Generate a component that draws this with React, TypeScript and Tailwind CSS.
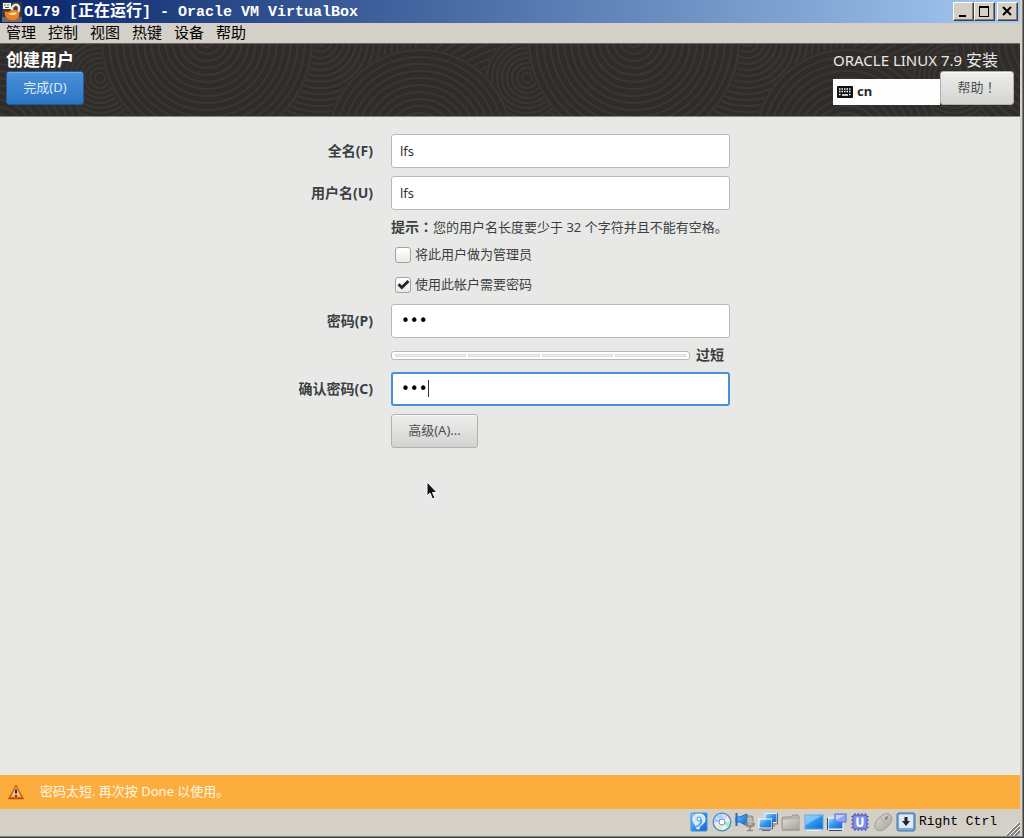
import type { ReactNode } from "react";

const menus = ["管理", "控制", "视图", "热键", "设备", "帮助"];

const rings = (step: number, count: number) =>
  Array.from({ length: count }, (_, index) => step * (index + 1));

function Rings({ cx, cy, count, step = 7 }: { cx: number; cy: number; count: number; step?: number }) {
  return (
    <g>
      <circle cx={cx} cy={cy} r={step * count + 2} fill="#302c29" stroke="none" />
      {rings(step, count).map((r) => (
        <circle key={r} cx={cx} cy={cy} r={r} />
      ))}
    </g>
  );
}

function HeaderPattern() {
  return (
    <svg className="absolute inset-0 h-full w-full" aria-hidden="true">
      <defs>
        <pattern id="rings" width="427" height="73" patternUnits="userSpaceOnUse">
          <g fill="none" stroke="#3a3633" strokeWidth="2">
            <Rings cx={100} cy={120} count={22} />
            <Rings cx={320} cy={-4} count={16} step={6} />
            <Rings cx={100} cy={34} count={8} step={5} />
            <Rings cx={420} cy={97} count={13} />
            <Rings cx={-7} cy={97} count={13} />
            <Rings cx={207} cy={-4} count={15} />
          </g>
        </pattern>
      </defs>
      <rect width="100%" height="100%" fill="url(#rings)" />
    </svg>
  );
}

function AppIcon() {
  return (
    <svg className="h-5 w-5" viewBox="0 0 20 20" aria-hidden="true">
      <rect width="20" height="20" fill="#3b3836" />
      <path d="M0 15h20v5H0z" fill="#6e6a66" />
      <path d="M1 1h8v6H1z" fill="#f4f4f4" />
      <path d="M2 3h2M5 3h2M3 5.500h4" stroke="#555" />
      <path d="M10 9c-1-8 8-8 7-2 0 3-1 3-2 4" fill="none" stroke="#e8e4de" strokeWidth="2.500" />
      <path d="M3 9c3 2 4 0 7-1 5-1 8 2 7 6-1 5-10 6-13 1C3 13 2 11 3 9z" fill="#ee7d1d" />
      <path d="M6 11c3 1 6-2 9 0-2 3-7 3-9 0z" fill="#ffe0a8" />
    </svg>
  );
}

function WindowButton({ label, children }: { label: string; children: ReactNode }) {
  return (
    <button
      type="button"
      aria-label={label}
      className="flex h-[19px] w-[21px] items-center justify-center border border-t-white border-r-[#404040] border-b-[#404040] border-l-white bg-[#d4d0c8] shadow-[inset_-1px_-1px_0_#808080]"
    >
      <svg className="h-[13px] w-[13px]" viewBox="0 0 13 13" fill="none" stroke="#000" shapeRendering="crispEdges">
        {children}
      </svg>
    </button>
  );
}

function Keyboard() {
  return (
    <svg className="h-3 w-4" viewBox="0 0 16 12" aria-hidden="true">
      <rect width="16" height="12" rx="1" fill="#111" />
      <path
        d="M2 3h12M2 5.500h12M2 8.500h2M12 8.500h2"
        stroke="#fff"
        strokeWidth="1.500"
        strokeDasharray="1.500 1"
      />
      <path d="M5 9h6" stroke="#fff" strokeWidth="1.500" />
    </svg>
  );
}

function Warning() {
  return (
    <svg className="h-4 w-4" viewBox="0 0 16 16" aria-hidden="true">
      <path d="M8 1.500 15 14.300H1z" fill="#f08a3c" stroke="#d9651a" strokeWidth="1.500" strokeLinejoin="round" />
      <path d="M1 14.500h14" stroke="#b84606" strokeWidth="1.500" strokeLinecap="round" />
      <path d="M8 3.500 12.500 12.500h-9z" fill="#f6d3ab" opacity=".8" />
      <path d="M8 5.500v4M8 11v1.700" stroke="#222" strokeWidth="1.800" />
    </svg>
  );
}

const statusIcons: { name: string; drawing: ReactNode }[] = [
  {
    name: "硬盘",
    drawing: (
      <>
        <rect x="2" y="1" width="16" height="18" rx="1" fill="url(#blue)" stroke="#3d8ed6" />
        <path d="M4 7c0-6 12-7 12 0 0 6-6 5-6 10-4 0-3-3-4-5-1-1-2-3-2-5z" fill="#cfe9fb" stroke="#fff" />
        <path d="M6 15c5-1 8-5 5-9" fill="none" stroke="#3a8fd8" strokeWidth="1.500" />
        <circle cx="10" cy="7" r="2" fill="#fff" stroke="#4a9ade" />
      </>
    ),
  },
  {
    name: "光驱",
    drawing: (
      <>
        <circle cx="10" cy="10" r="8.800" fill="#e4f0fb" stroke="#3f8bd0" strokeWidth="1.300" />
        <path d="M10 10 4 4.500a8 8 0 0 1 6-2.500z" fill="#9fd9fa" />
        <path d="M10 10V2a8 8 0 0 1 5.500 2.200z" fill="#f5c5ec" />
        <path d="M10 10h8a8 8 0 0 1-2 5.300z" fill="#a6ecab" />
        <path d="M10 10v8a8 8 0 0 1-5.600-2.300z" fill="#f2e6a8" />
        <path d="M10 10H2a8 8 0 0 1 1-4z" fill="#cdb4f2" />
        <circle cx="10" cy="10" r="3" fill="#fff" stroke="#5a9bd6" />
      </>
    ),
  },
  {
    name: "音频",
    drawing: (
      <>
        <path d="M1 5h4l7-3v12L5 10H1z" fill="url(#blue)" stroke="#1f66b5" />
        <path d="M1.500 1v13" stroke="#2370bf" strokeWidth="2" />
        <rect x="12" y="4" width="6" height="10" rx="2" fill="#aaa69f" stroke="#88857f" />
        <path d="M12 7h6M12 9.500h6M15 4v9" stroke="#d8d5cf" strokeWidth=".7" />
        <path d="M10.500 11c0 5 9 5 9 0M15 15v3M12 18.500h6" fill="none" stroke="#8e8b85" strokeWidth="1.400" />
      </>
    ),
  },
  {
    name: "网络",
    drawing: (
      <>
        <rect x="7" y="1.500" width="12" height="9" fill="url(#blue)" stroke="#eef5fb" />
        <path d="M7 12h12.500V1M12 14h5" fill="none" stroke="#55687b" />
        <rect x="1" y="7" width="13" height="9" fill="url(#blue)" stroke="#fff" />
        <path d="M1 17h13.500V7M4 18.500h8" fill="none" stroke="#55687b" />
      </>
    ),
  },
  {
    name: "共享文件夹",
    drawing: (
      <>
        <path d="M1 17V6l1-1h8l2-2h5l1 2v12z" fill="#b9b6b0" stroke="#99968f" />
        <path d="M2 17V8l16-1v10z" fill="url(#grey)" />
        <path d="M1 18h18" stroke="#8a8781" />
      </>
    ),
  },
  {
    name: "显示",
    drawing: (
      <>
        <rect x="1" y="3" width="18" height="14" fill="url(#blue)" stroke="#5ba8e8" />
        <path d="M1.500 3.500h17L1.500 13z" fill="#8dd0fa" opacity=".65" />
        <path d="M2 18.500h15" stroke="#eef4fa" />
      </>
    ),
  },
  {
    name: "录像",
    drawing: (
      <>
        <rect x="1" y="6" width="15" height="11" fill="url(#blue)" stroke="#fff" />
        <path d="M2 18.500h13M.5 6v12" stroke="#334e74" />
        <rect x="8" y="2" width="11" height="8" fill="#8fa8f2" stroke="#5774d1" />
        <path d="M9 3h9l-9 5z" fill="#c8d4fc" />
      </>
    ),
  },
  {
    name: "虚拟化",
    drawing: (
      <>
        <path
          d="M5 1v18M8.500 1v18M12 1v18M15.500 1v18M1 4.500h18M1 8h18M1 12h18M1 15.500h18"
          stroke="#5a66c4"
          strokeWidth="1.200"
        />
        <rect x="3" y="3" width="14" height="14" rx="1" fill="#7d92ea" stroke="#4856b4" />
        <path d="M7.500 5.500v6q0 2.500 2.500 2.500t2.500-2.500v-6" fill="none" stroke="#fff" strokeWidth="2.200" />
      </>
    ),
  },
  {
    name: "鼠标",
    drawing: (
      <>
        <path d="M17 3c4 3 1 8-2 11-4 5-10 6-12 3-3-4 0-8 4-12 4-3 7-5 10-2z" fill="url(#grey)" stroke="#9c9992" />
        <path d="M8 5c1 4 4 7 8 7M11 9l4-5" fill="none" stroke="#b5b2aa" />
        <ellipse cx="13.500" cy="6" rx="1.300" ry="2" transform="rotate(40 13.500 6)" fill="#8d8a84" />
      </>
    ),
  },
  {
    name: "键盘捕获",
    drawing: (
      <>
        <rect x="1" y="1" width="18" height="18" rx="2" fill="#7ba8da" stroke="#40719f" />
        <rect x="3" y="2.500" width="14" height="13.500" rx="1" fill="#dceaf8" />
        <path d="M8.500 5h3v4H14l-4 5-4-5h2.500z" fill="#222" />
      </>
    ),
  },
];

function Check({ id, label, checked }: { id: string; label: string; checked?: boolean }) {
  return (
    <div className="col-start-2 ml-1 flex h-[22px] items-center gap-1">
      <span className="relative flex">
        <input
          id={id}
          type="checkbox"
          defaultChecked={checked}
          className="peer h-4 w-4 appearance-none rounded-[3px] border border-[#a1a19f] bg-linear-to-b from-white to-[#eaeae9]"
        />
        <svg className="pointer-events-none absolute inset-0 hidden h-4 w-4 peer-checked:block" viewBox="0 0 16 16">
          <path d="M3.500 7.200 6.800 10.500 13.500 4" fill="none" stroke="#232729" strokeWidth="3" />
        </svg>
      </span>
      <label htmlFor={id}>{label}</label>
    </div>
  );
}

const labelClass = "text-right text-sm leading-[34px] font-bold whitespace-nowrap";
const fieldClass =
  "h-[34px] w-full rounded-[3px] border border-[#b9b9b7] bg-white px-2 text-[13px] text-[#2e3436] outline-none";
const passwordClass =
  "h-[34px] w-full rounded-[3px] bg-white font-['DejaVu_Sans',sans-serif] text-[15px] text-black outline-none";
const buttonClass =
  "rounded-[3px] border border-[#b0b0ae] bg-linear-to-b from-[#eeeeed] to-[#d3d3d1] text-[13px] text-[#4b5052] shadow-[inset_0_1px_0_#f8f8f7]";

export default function App() {
  return (
    <div className="flex min-h-screen flex-col border-r border-b border-[#404040] bg-[#d4d0c8] font-['Noto_Sans','Noto_Sans_CJK_SC',sans-serif] text-[13px] text-[#3a4042]">
      <div className="flex flex-1 flex-col border-r border-b border-[#808080] pr-0.5">
        <div className="flex h-[23px] items-center bg-linear-to-r from-[#0a246a] to-[#a6caf0] px-0.5">
          <AppIcon />
          <h1 className="ml-0.5 flex-1 pt-0.5 font-['Liberation_Mono','Noto_Sans_CJK_SC',monospace] text-[15px] leading-5 font-bold whitespace-nowrap text-white">
            OL79 [<span className="text-base leading-5">正在运行</span>] - Oracle VM VirtualBox
          </h1>
          <WindowButton label="最小化">
            <path d="M2 10.500h7" strokeWidth="2" />
          </WindowButton>
          <WindowButton label="最大化">
            <path d="M1.500 2v9.500h9V2M1 2h10" />
            <path d="M1 2h10" strokeWidth="2" />
          </WindowButton>
          <div className="ml-0.5">
            <WindowButton label="关闭">
              <path d="m2 2 8 8M10 2l-8 8" strokeWidth="2" shapeRendering="auto" />
            </WindowButton>
          </div>
        </div>

        <nav className="flex h-5 items-center gap-3 px-1.5 font-['Liberation_Sans','Noto_Sans_CJK_SC',sans-serif] text-[15px] leading-5 text-black">
          {menus.map((menu) => (
            <button type="button" key={menu}>
              {menu}
            </button>
          ))}
        </nav>

        <header className="relative h-[74px] border-t border-b border-t-[#6b6864] border-b-[#8b8783] bg-[#302c29]">
          <HeaderPattern />
          <div className="relative flex justify-between px-1.5">
            <div>
              <h2 className="h-[27px] pt-1 text-[17px] leading-6 font-bold text-white">创建用户</h2>
              <button
                type="button"
                className="h-[34px] w-[78px] rounded-[3px] border border-[#1f5c9f] bg-linear-to-b from-[#4a90d9] to-[#2a76c6] text-[13px] text-[#dcebfa] shadow-[inset_0_1px_0_#6ba8e4]"
              >
                完成(D)
              </button>
            </div>
            <div>
              <p className="h-[27px] pt-1 text-[15px] leading-6 text-[#e8e8e7]">
                ORACLE LINUX 7.9 <span className="text-base leading-6">安装</span>
              </p>
              <div className="flex items-end">
                <button
                  type="button"
                  className="flex h-[26px] w-[107px] items-center gap-1 bg-[#fdfdfd] px-1 text-[13px] font-bold text-[#232729]"
                >
                  <Keyboard />
                  cn
                </button>
                <button
                  type="button"
                  className={`${buttonClass} h-[34px] w-[74px] font-['Noto_Sans','Noto_Sans_CJK_TC',sans-serif]`}
                >
                  帮助！
                </button>
              </div>
            </div>
          </div>
        </header>

        <main className="flex-1 bg-[#e8e8e7] pt-[17px]">
          <form className="grid grid-cols-[83px_339px] justify-center gap-x-[18px] gap-y-2">
            <label htmlFor="fullname" className={labelClass}>
              全名(F)
            </label>
            <input id="fullname" defaultValue="lfs" className={fieldClass} />

            <label htmlFor="username" className={labelClass}>
              用户名(U)
            </label>
            <input id="username" defaultValue="lfs" className={fieldClass} />

            <p className="col-start-2 h-[18px] leading-4 whitespace-nowrap">
              <b className="font-['Noto_Sans_CJK_TC',sans-serif] text-sm leading-4">提示：</b>
              您的用户名长度要少于 32 个字符并且不能有空格。
            </p>
            <Check id="admin" label="将此用户做为管理员" />
            <Check id="require" label="使用此帐户需要密码" checked />

            <label htmlFor="password" className={labelClass}>
              密码(P)
            </label>
            <input
              id="password"
              type="password"
              defaultValue="lfs"
              className={`${passwordClass} border border-[#b9b9b7] px-[9px]`}
            />

            <div className="col-start-2 flex h-[18px] items-center gap-1.5">
              <div
                role="meter"
                aria-label="密码强度"
                aria-valuemin={0}
                aria-valuemax={4}
                aria-valuenow={0}
                className="flex h-[9px] w-[299px] items-center gap-0.5 rounded-[3px] border border-[#b9b9b7] bg-white px-[3px]"
              >
                {[1, 2, 3, 4].map((level) => (
                  <span key={level} className="h-[3px] flex-1 border border-[#d9d9de] bg-[#f3f3f5]" />
                ))}
              </div>
              <b className="text-sm leading-[18px]">过短</b>
            </div>

            <label htmlFor="confirm" className={labelClass}>
              确认密码(C)
            </label>
            <div className="relative">
              <input
                id="confirm"
                type="password"
                defaultValue="lfs"
                className={`${passwordClass} border-2 border-[#4a90d9] px-2`}
              />
              <span className="absolute top-2 left-[37px] h-[17px] w-px bg-[#333]" />
            </div>

            <div className="relative col-start-2">
              <button type="button" className={`${buttonClass} h-[34px] w-[87px]`}>
                高级(A)...
              </button>
              <svg className="absolute top-[67px] left-[35px] h-5 w-3" viewBox="0 0 12 20" aria-hidden="true">
                <path
                  d="M1 1v14l3-3 2.500 6 2.500-1-2.500-5.500H11z"
                  fill="#111"
                  stroke="#fff"
                  strokeWidth="1"
                />
              </svg>
            </div>
          </form>
        </main>

        <div role="alert" className="flex h-[34px] items-center gap-4 bg-[#fbad3d] px-2 text-[#fff7e8]">
          <Warning />
          <span>密码太短. 再次按 Done 以使用。</span>
        </div>

        <footer className="flex h-[27px] items-start justify-end gap-[3px] pt-[3px]">
          <svg className="absolute h-0 w-0" aria-hidden="true">
            <defs>
              <linearGradient id="blue" x1="0" y1="0" x2="1" y2="1">
                <stop offset="0" stopColor="#9bdcff" />
                <stop offset=".5" stopColor="#2f93ee" />
                <stop offset="1" stopColor="#1465cf" />
              </linearGradient>
              <linearGradient id="grey" x1="0" y1="0" x2="1" y2="1">
                <stop offset="0" stopColor="#dedbd5" />
                <stop offset="1" stopColor="#a5a29b" />
              </linearGradient>
            </defs>
          </svg>
          {statusIcons.map((icon) => (
            <svg key={icon.name} className="h-5 w-5" viewBox="0 0 20 20" role="img" aria-label={icon.name}>
              {icon.drawing}
            </svg>
          ))}
          <span className="font-['Liberation_Mono',monospace] text-[13px] leading-5 text-black">Right Ctrl</span>
          <svg className="ml-1.5 h-[14px] w-[14px] self-end" viewBox="0 0 14 14" aria-hidden="true">
            <path d="M1 14 14 1M5 14l9-9M9 14l5-5" stroke="#808080" strokeWidth="2" />
            <path d="M0 13 13 0M4 13l10-10M8 13l6-6" stroke="#fff" />
          </svg>
        </footer>
      </div>
    </div>
  );
}
